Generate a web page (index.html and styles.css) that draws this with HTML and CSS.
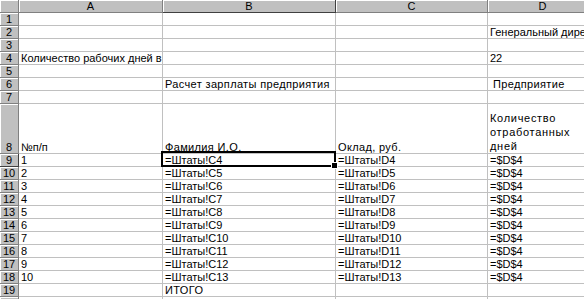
FILE: index.html
```html
<!DOCTYPE html>
<html>
<head>
<meta charset="utf-8">
<link rel="stylesheet" href="styles.css">
</head>
<body>
<div class="sheet">
  <div class="grid">
    <div class="hd corner"></div><div class="hd col">A</div><div class="hd col sel">B</div><div class="hd col">C</div><div class="hd col">D</div>

    <div class="hd row">1</div><div class="c"></div><div class="c"></div><div class="c"></div><div class="c"></div>
    <div class="hd row">2</div><div class="c"></div><div class="c"></div><div class="c"></div><div class="c">Генеральный директор</div>
    <div class="hd row">3</div><div class="c"></div><div class="c"></div><div class="c"></div><div class="c"></div>
    <div class="hd row">4</div><div class="c">Количество рабочих дней в</div><div class="c"></div><div class="c"></div><div class="c">22</div>
    <div class="hd row">5</div><div class="c"></div><div class="c"></div><div class="c"></div><div class="c"></div>
    <div class="hd row">6</div><div class="c"></div><div class="c sp">Расчет зарплаты предприятия</div><div class="c"></div><div class="c ind sp">Предприятие</div>
    <div class="hd row">7</div><div class="c"></div><div class="c"></div><div class="c"></div><div class="c"></div>
    <div class="hd row">8</div><div class="c">№п/п</div><div class="c sp">Фамилия И.О.</div><div class="c sp">Оклад, руб.</div><div class="c wrap">Количество отработанных дней</div>
    <div class="hd row sel">9</div><div class="c">1</div><div class="c">=Штаты!C4</div><div class="c">=Штаты!D4</div><div class="c">=$D$4</div>
    <div class="hd row">10</div><div class="c">2</div><div class="c">=Штаты!C5</div><div class="c">=Штаты!D5</div><div class="c">=$D$4</div>
    <div class="hd row">11</div><div class="c">3</div><div class="c">=Штаты!C6</div><div class="c">=Штаты!D6</div><div class="c">=$D$4</div>
    <div class="hd row">12</div><div class="c">4</div><div class="c">=Штаты!C7</div><div class="c">=Штаты!D7</div><div class="c">=$D$4</div>
    <div class="hd row">13</div><div class="c">5</div><div class="c">=Штаты!C8</div><div class="c">=Штаты!D8</div><div class="c">=$D$4</div>
    <div class="hd row">14</div><div class="c">6</div><div class="c">=Штаты!C9</div><div class="c">=Штаты!D9</div><div class="c">=$D$4</div>
    <div class="hd row">15</div><div class="c">7</div><div class="c">=Штаты!C10</div><div class="c">=Штаты!D10</div><div class="c">=$D$4</div>
    <div class="hd row">16</div><div class="c">8</div><div class="c">=Штаты!C11</div><div class="c">=Штаты!D11</div><div class="c">=$D$4</div>
    <div class="hd row">17</div><div class="c">9</div><div class="c">=Штаты!C12</div><div class="c">=Штаты!D12</div><div class="c">=$D$4</div>
    <div class="hd row">18</div><div class="c">10</div><div class="c">=Штаты!C13</div><div class="c">=Штаты!D13</div><div class="c">=$D$4</div>
    <div class="hd row">19</div><div class="c"></div><div class="c sp">ИТОГО</div><div class="c"></div><div class="c"></div>
    <div class="hd row"></div><div class="c"></div><div class="c"></div><div class="c"></div><div class="c"></div>
  </div>
  <div class="selection"><span class="handle"></span></div>
</div>
</body>
</html>
```

FILE: styles.css
```css
html, body {
  margin: 0;
  padding: 0;
  background: #fff;
  overflow: hidden;
}
.sheet {
  position: relative;
  width: 584px;
  height: 299px;
  overflow: hidden;
  font-family: "Liberation Sans", Arial, sans-serif;
  font-size: 11px;
  color: #000;
}
.grid {
  display: grid;
  grid-template-columns: 19px 144px 173px 152px 110px;
  grid-template-rows: 13px repeat(7, 13px) 50px repeat(12, 13px);
  width: 598px;
}
.hd {
  background: #c0c0c0;
  border-right: 1px solid #808080;
  border-bottom: 1px solid #808080;
  box-shadow: inset 1px 1px 0 #ffffff;
  display: flex;
  align-items: flex-end;
  justify-content: center;
  line-height: 12px;
  box-sizing: border-box;
  overflow: hidden;
}
.hd.col {
  align-items: center;
}
.hd.sel {
  border-right-color: #404040;
  border-bottom-color: #404040;
}
.c {
  border-right: 1px solid #c0c0c0;
  border-bottom: 1px solid #c0c0c0;
  box-sizing: border-box;
  padding: 0 2px 0 2px;
  display: flex;
  align-items: flex-end;
  white-space: nowrap;
  overflow: hidden;
  line-height: 12px;
}
.c.sp {
  letter-spacing: 0.35px;
}
.c.ind {
  padding-left: 5px;
}
.c.wrap {
  white-space: normal;
  line-height: 14px;
  word-spacing: 100px;
  letter-spacing: 0.7px;
}
.selection {
  position: absolute;
  left: 161px;
  top: 151px;
  width: 175px;
  height: 16px;
  border: 2px solid #000;
  box-sizing: border-box;
}
.handle {
  position: absolute;
  right: -4px;
  bottom: -4px;
  width: 5px;
  height: 5px;
  background: #000;
  border: 1px solid #fff;
}
```
